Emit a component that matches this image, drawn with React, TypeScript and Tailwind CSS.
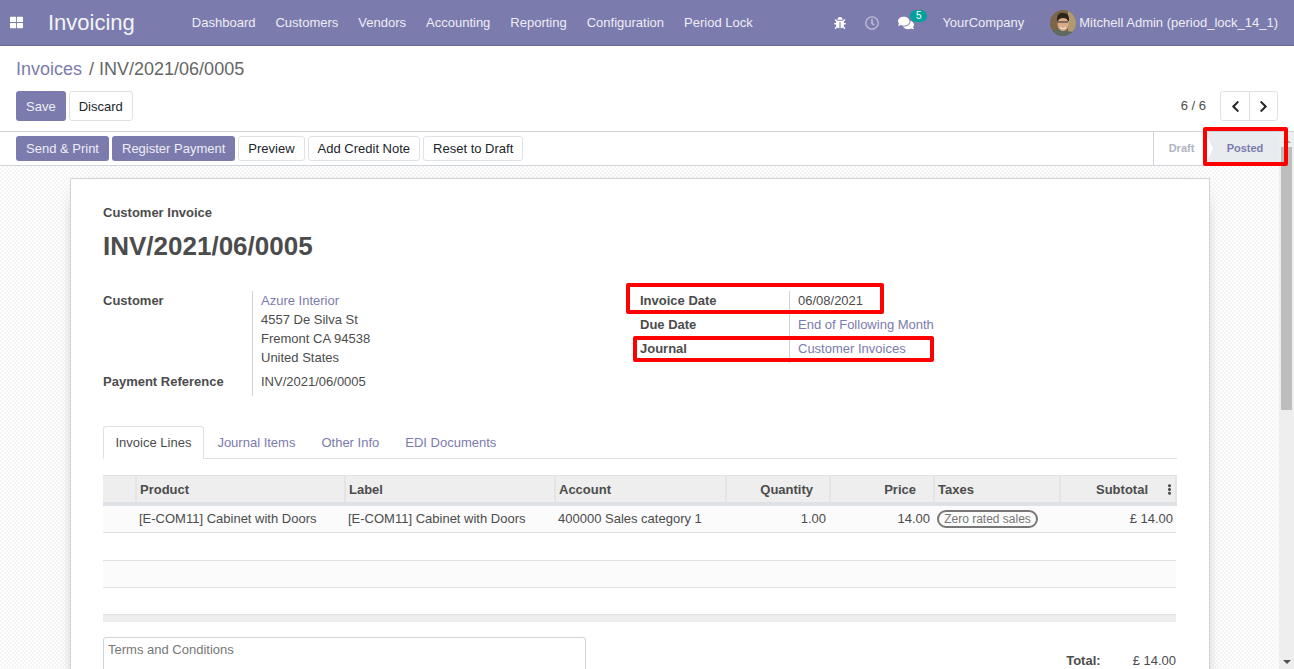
import { FaBug, FaChevronLeft, FaChevronRight, FaComments, FaEllipsisV, FaRegClock, FaThLarge } from "react-icons/fa";

const menus = ["Dashboard", "Customers", "Vendors", "Accounting", "Reporting", "Configuration", "Period Lock"];
const primaryBtn = "h-[25px] rounded-[3px] bg-[#7c7bad] px-[10px] text-[13px] leading-none text-[#eeedf5]";
const plainBtn = "h-[25px] rounded-[3px] border border-[#dee2e6] bg-white px-[9px] text-[13px] leading-none text-[#212529]";
const th = "h-[28px] border-r-2 border-[#e4e4e4] px-[3px] pt-[2px] text-[13px] font-bold text-[#4c4c4c]";
const td = "h-[29px] px-[3px] text-[13px] text-[#4c4c4c]";

const Avatar = () => (
  <svg viewBox="0 0 26 26" className="h-[26px] w-[26px] shrink-0 rounded-full">
    <rect width="26" height="26" fill="#7d6547" />
    <rect x="18" width="8" height="26" fill="#b09a72" />
    <path d="M0 26V21Q6 18 13 20T26 22V26Z" fill="#5e6a60" />
    <path d="M7 8Q8 2 14 3Q19 3 19 9L19 11H7Z" fill="#2e241c" />
    <ellipse cx="13" cy="14" rx="5.500" ry="7" fill="#d9ab88" />
    <path d="M7.500 10Q13 6 18.500 10L18 7Q13 4 8 7Z" fill="#2e241c" />
    <path d="M8 12H18" stroke="#2b2b2b" strokeWidth="1.200" />
    <path d="M10 17.500Q13 19.500 16 17.500" stroke="#f3e7dc" strokeWidth="1.200" fill="none" />
  </svg>
);

const Navbar = () => (
  <header className="flex h-[46px] shrink-0 items-center border-b border-[#6a6995] bg-[#7c7bad] text-[13px] text-[#eeedf5]">
    <FaThLarge className="ml-[10px] text-[13px] text-white" />
    <span className="ml-[25px] text-[22px] leading-none text-[#f3f3f8]">Invoicing</span>
    <nav className="ml-[57px] flex gap-[20px]">
      {menus.map((m) => (
        <span key={m}>{m}</span>
      ))}
    </nav>
    <div className="ml-auto flex items-center pr-[16px]">
      <FaBug className="text-[12px] text-white" />
      <FaRegClock className="ml-[19px] text-[14px] text-[#c0bfd8]" />
      <div className="relative ml-[19px] mr-[15px] w-[29px]">
        <FaComments className="text-[16px] text-white" />
        <span className="absolute left-[12px] top-[-5px] h-[12px] w-[17px] rounded-full bg-[#00a09d] text-center text-[10px] leading-[12px] text-white">5</span>
      </div>
      <span>YourCompany</span>
      <div className="ml-[26px] flex items-center gap-[3px]">
        <Avatar />
        <span>Mitchell Admin (period_lock_14_1)</span>
      </div>
    </div>
  </header>
);

const ControlPanel = () => (
  <div className="h-[86px] shrink-0 border-b border-[#ced4da] bg-white px-[16px]">
    <div className="pt-[11px] text-[18px] leading-[24px] text-[#666666]">
      <span className="text-[#7c7bad]">Invoices</span>
      <span className="ml-[2px]"> / INV/2021/06/0005</span>
    </div>
    <div className="mt-[10px] flex items-center">
      <button className={`${primaryBtn} h-[30px]!`}>Save</button>
      <button className={`${plainBtn} ml-[3px] h-[30px]!`}>Discard</button>
      <span className="ml-auto text-[13px] text-[#4c4c4c]">6 / 6</span>
      <div className="ml-[14px] flex h-[30px] rounded-[3px] border border-[#dee2e6] text-[13px] text-[#212529]">
        <span className="flex w-[29px] items-center justify-center border-r border-[#dee2e6]">
          <FaChevronLeft />
        </span>
        <span className="flex w-[27px] items-center justify-center">
          <FaChevronRight />
        </span>
      </div>
    </div>
  </div>
);

const StatusBar = () => (
  <div className="flex h-[34px] shrink-0 items-center border-b border-[#ced4da] bg-white pl-[16px]">
    <div className="flex gap-[3px]">
      <button className={primaryBtn}>Send &amp; Print</button>
      <button className={primaryBtn}>Register Payment</button>
      <button className={plainBtn}>Preview</button>
      <button className={plainBtn}>Add Credit Note</button>
      <button className={plainBtn}>Reset to Draft</button>
    </div>
    <div className="ml-auto flex h-full items-stretch border-l border-[#ced4da] text-[11px] font-bold">
      <span className="flex w-[51px] items-center justify-center pl-[4px] text-[#adb5bd]">Draft</span>
      <span className="flex w-[74px] items-center justify-center bg-[#e9ecef] pl-[6px] text-[#7c7bad] [clip-path:polygon(0_0,100%_0,100%_100%,0_100%,8px_50%)]">Posted</span>
    </div>
  </div>
);

const Field = ({ label, children, h = "h-[19px]" }: { label?: string; children: React.ReactNode; h?: string }) => (
  <div className="flex">
    <div className={`${h} w-[149px] shrink-0 font-bold`}>{label}</div>
    <div className="border-l border-[#ced4da] pl-[8px]">{children}</div>
  </div>
);

const LineTable = () => (
  <table className="mt-[16px] w-full table-fixed border-collapse">
    <colgroup>
      <col className="w-[33px]" />
      <col className="w-[209px]" />
      <col className="w-[210px]" />
      <col className="w-[171px]" />
      <col className="w-[104px]" />
      <col className="w-[104px]" />
      <col className="w-[126px]" />
      <col />
    </colgroup>
    <thead>
      <tr className="border-t border-b-[4px] border-t-[#dee2e6] border-b-[#dee2e6] bg-[#eeeeee]">
        <th className={th} />
        <th className={`${th} text-left`}>Product</th>
        <th className={`${th} text-left`}>Label</th>
        <th className={`${th} text-left`}>Account</th>
        <th className={`${th} pr-[16px] text-right`}>Quantity</th>
        <th className={`${th} pr-[17px] text-right`}>Price</th>
        <th className={`${th} text-left`}>Taxes</th>
        <th className={`${th} border-r-0 pr-0 text-right`}>
          <span className="flex items-center justify-end">
            Subtotal
            <FaEllipsisV className="ml-[16px] text-[11px]" />
          </span>
        </th>
      </tr>
    </thead>
    <tbody>
      <tr className="border-b border-[#dee2e6] bg-[#fbfbfb]">
        <td className={td} />
        <td className={td}>[E-COM11] Cabinet with Doors</td>
        <td className={td}>[E-COM11] Cabinet with Doors</td>
        <td className={td}>400000 Sales category 1</td>
        <td className={`${td} pr-[4px] text-right`}>1.00</td>
        <td className={`${td} pr-[4px] text-right`}>14.00</td>
        <td className={td}>
          <span className="block h-[18px] w-[101px] rounded-full border-2 border-[#777777] text-center text-[12px] leading-[14px] text-[#777777]">Zero rated sales</span>
        </td>
        <td className={`${td} text-right`}>£ 14.00</td>
      </tr>
      <tr className="h-[28px] border-b border-[#dee2e6] bg-white">
        <td colSpan={8} />
      </tr>
      <tr className="h-[27px] border-b border-[#dee2e6] bg-[#fbfbfb]">
        <td colSpan={8} />
      </tr>
      <tr className="h-[27px] border-b border-[#dee2e6] bg-white">
        <td colSpan={8} />
      </tr>
      <tr className="h-[7px] bg-[#eeeeee]">
        <td colSpan={8} />
      </tr>
    </tbody>
  </table>
);

const Sheet = () => (
  <div className="ml-[70px] mt-[12px] h-[600px] w-[1140px] border border-[#ced4da] bg-white px-[32px] pt-[24px] text-[13px] leading-[19px] text-[#4c4c4c] shadow-[0_5px_20px_-15px_#000]">
    <div className="font-bold">Customer Invoice</div>
    <h1 className="mt-[7px] text-[26px] font-bold leading-[34px]">INV/2021/06/0005</h1>
    <div className="mt-[28px] flex">
      <div className="w-[537px]">
        <Field label="Customer" h="h-[81px]">
          <div className="text-[#7c7bad]">Azure Interior</div>
          <div>4557 De Silva St</div>
          <div>Fremont CA 94538</div>
          <div className="h-[24px]">United States</div>
        </Field>
        <Field label="Payment Reference" h="h-[24px]">
          <div className="h-[24px]">INV/2021/06/0005</div>
        </Field>
      </div>
      <div>
        <Field label="Invoice Date" h="h-[24px]">
          <div className="h-[24px]">06/08/2021</div>
        </Field>
        <Field label="Due Date" h="h-[24px]">
          <div className="h-[24px] text-[#7c7bad]">End of Following Month</div>
        </Field>
        <Field label="Journal" h="h-[24px]">
          <div className="h-[24px] text-[#7c7bad]">Customer Invoices</div>
        </Field>
      </div>
    </div>
    <div className="mt-[30px] flex h-[33px] border-b border-[#dee2e6]">
      <span className="h-[33px] rounded-t-[3px] border border-b-0 border-[#dee2e6] bg-white px-[11.500px] leading-[31px]">Invoice Lines</span>
      <div className="flex gap-[26px] pl-[13.500px] leading-[33px] text-[#7c7bad]">
        <span>Journal Items</span>
        <span>Other Info</span>
        <span>EDI Documents</span>
      </div>
    </div>
    <LineTable />
    <div className="mt-[15px] flex items-start justify-between">
      <div className="h-[60px] w-[483px] rounded-[3px] border border-[#ced4da] px-[4px] py-[2px] text-[#777777]">Terms and Conditions</div>
      <div className="mr-[1px] mt-[14px] flex">
        <span className="font-bold">Total:</span>
        <span className="ml-[32px]">£ 14.00</span>
      </div>
    </div>
  </div>
);

const Scrollbar = () => (
  <div className="flex w-[15px] shrink-0 flex-col items-center bg-[#eeeeee]">
    <span className="mt-[7px] h-0 w-0 border-x-[4px] border-b-[4px] border-x-transparent border-b-[#a3a3a3]" />
    <div className="mt-[4px] h-[263px] w-[11px] bg-[#bdbdbd]" />
    <span className="mt-auto mb-[5px] h-0 w-0 border-x-[4px] border-t-[4px] border-x-transparent border-t-[#505050]" />
  </div>
);

// the red marks were painted over the page in the picture
const Marks = () => (
  <>
    <div className="absolute left-[1203px] top-[127px] h-[39px] w-[85px] rounded-[2px] border-[4px] border-[#ff0000]" />
    <div className="absolute left-[626px] top-[283px] h-[31px] w-[258px] rounded-[2px] border-[4px] border-[#ff0000]" />
    <div className="absolute left-[633px] top-[336px] h-[26px] w-[301px] rounded-[2px] border-[4px] border-[#ff0000]" />
  </>
);

export default function App() {
  return (
    <div className="relative flex h-[669px] w-[1294px] flex-col overflow-hidden bg-white font-['Liberation_Sans',Arial,sans-serif]">
      <Navbar />
      <ControlPanel />
      <div className="flex min-h-0 flex-1">
        <div className="flex min-w-0 flex-1 flex-col">
          <StatusBar />
          <div className="min-h-0 flex-1 overflow-hidden bg-[repeating-conic-gradient(#f4f4f4_0_25%,#ffffff_0_50%)] bg-[length:4px_4px]">
            <Sheet />
          </div>
        </div>
        <Scrollbar />
      </div>
      <Marks />
    </div>
  );
}
